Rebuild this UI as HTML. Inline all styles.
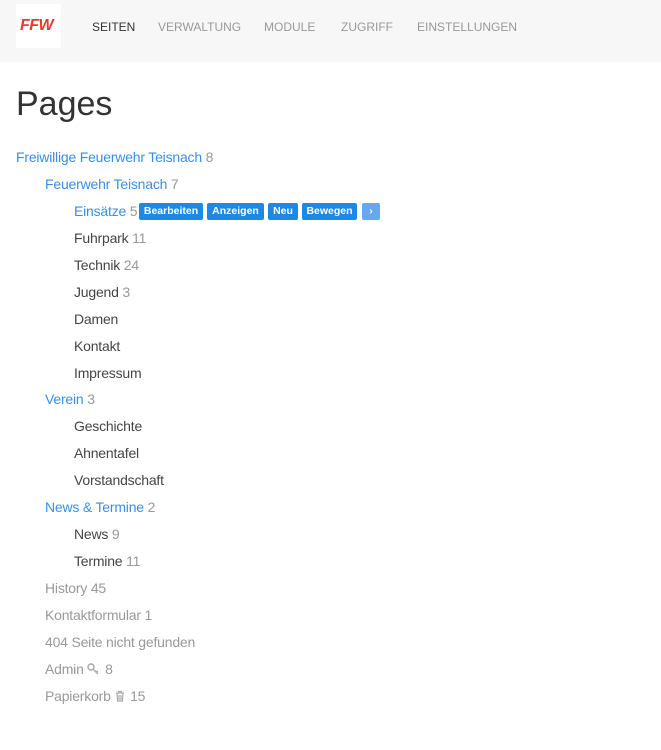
<!DOCTYPE html>
<html><head><meta charset="utf-8"><style>
body{margin:0;width:661px;height:750px;font-family:"Liberation Sans",sans-serif;background:#fff;overflow:hidden}
.nav{height:62px;background:#f7f7f7;position:relative}
.logo{position:absolute;left:16px;top:4px;width:45px;height:44px;background:#fff}
.logo span{position:absolute;left:4px;top:13px;font:italic bold 16px "Liberation Sans",sans-serif;color:#e53935;letter-spacing:-0.5px}
.nav a{position:absolute;top:20px;font-size:12px;color:#999;text-decoration:none}
h1{position:absolute;left:16px;top:85px;margin:0;font-weight:normal;font-size:34px;color:#333}
.r{position:absolute;font-size:14px;color:#444;white-space:nowrap;line-height:18px;letter-spacing:-0.2px}
.b{color:#3a8ee6}.g{color:#999}.c{color:#999}
.btn{position:absolute;top:1px;background:#1e88e5;color:#fff;font-size:10.5px;font-weight:bold;height:17px;line-height:17px;border-radius:2px;text-align:center;letter-spacing:0}
</style></head><body>
<div class="nav"><div class="logo"><span>FFW</span></div>
<a style="left:92px;color:#333">SEITEN</a><a style="left:158px">VERWALTUNG</a><a style="left:264px">MODULE</a><a style="left:341px">ZUGRIFF</a><a style="left:417px">EINSTELLUNGEN</a></div>
<h1>Pages</h1>
<div class="r b" style="left:16px;top:148px">Freiwillige Feuerwehr Teisnach <span class="c">8</span></div>
<div class="r b" style="left:45px;top:175px">Feuerwehr Teisnach <span class="c">7</span></div>
<div class="r b" style="left:74px;top:202px;width:320px">Einsätze <span class="c">5</span>
<span class="btn" style="left:65px;width:64px">Bearbeiten</span><span class="btn" style="left:133px;width:57px">Anzeigen</span><span class="btn" style="left:194px;width:30px">Neu</span><span class="btn" style="left:228px;width:55px">Bewegen</span><span class="btn" style="left:288px;width:18px;background:#64a9ee">›</span></div>
<div class="r" style="left:74px;top:229px">Fuhrpark <span class="c">11</span></div>
<div class="r" style="left:74px;top:256px">Technik <span class="c">24</span></div>
<div class="r" style="left:74px;top:283px">Jugend <span class="c">3</span></div>
<div class="r" style="left:74px;top:310px">Damen</div>
<div class="r" style="left:74px;top:337px">Kontakt</div>
<div class="r" style="left:74px;top:364px">Impressum</div>
<div class="r b" style="left:45px;top:390px">Verein <span class="c">3</span></div>
<div class="r" style="left:74px;top:417px">Geschichte</div>
<div class="r" style="left:74px;top:444px">Ahnentafel</div>
<div class="r" style="left:74px;top:471px">Vorstandschaft</div>
<div class="r b" style="left:45px;top:498px">News &amp; Termine <span class="c">2</span></div>
<div class="r" style="left:74px;top:525px">News <span class="c">9</span></div>
<div class="r" style="left:74px;top:552px">Termine <span class="c">11</span></div>
<div class="r g" style="left:45px;top:579px">History 45</div>
<div class="r g" style="left:45px;top:606px">Kontaktformular 1</div>
<div class="r g" style="left:45px;top:633px">404 Seite nicht gefunden</div>
<div class="r g" style="left:45px;top:660px">Admin <svg width="14" height="12" viewBox="0 0 14 12" style="vertical-align:-1px"><circle cx="4" cy="4" r="3" fill="none" stroke="#aaa" stroke-width="1.5"/><path d="M6 6l5 5M9 9l2-1" stroke="#aaa" stroke-width="1.5" fill="none"/></svg> 8</div>
<div class="r g" style="left:45px;top:687px">Papierkorb <svg width="12" height="12" viewBox="0 0 12 12" style="vertical-align:-1px"><path d="M2 3h8M4.5 3V1.5h3V3M3 3.5l.6 7.5h4.8l.6-7.5M5 5v5M7 5v5" stroke="#aaa" stroke-width="1.2" fill="none"/></svg> 15</div>
</body></html>
